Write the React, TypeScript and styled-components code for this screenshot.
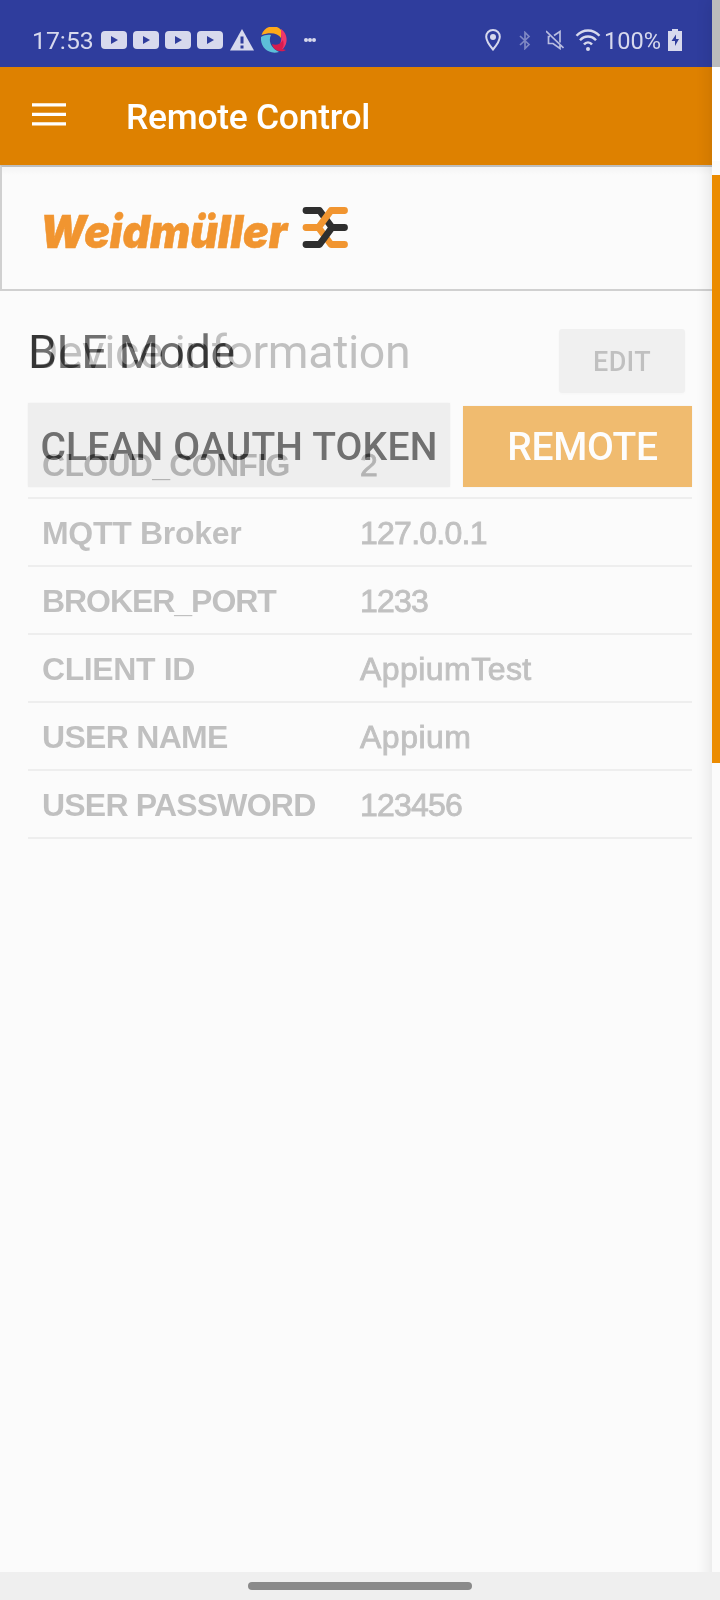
import React from 'react';
import styled, { createGlobalStyle } from 'styled-components';

const GlobalStyle = createGlobalStyle`
  *, *::before, *::after { box-sizing: border-box; }
  body { margin: 0; background: #fbfbfb; font-family: Roboto, sans-serif; overflow: hidden; }
`;

const Screen = styled.div`
  position: relative;
  width: 720px;
  height: 1600px;
  display: flex;
  flex-direction: column;
  background: #fbfbfb;
  overflow: hidden;
`;

const StatusBar = styled.header`
  flex: none;
  height: 67px;
  padding: 13px 38px 0 32px;
  display: flex;
  align-items: center;
  justify-content: space-between;
  background: #2f3d9d;
  color: #d7d9ed;
`;

const StatusGroup = styled.div`
  display: flex;
  align-items: center;
`;

const StatusText = styled.span<{ $size: number; $width: number; $gap?: number }>`
  width: ${(p) => p.$width}px;
  margin-left: ${(p) => p.$gap ?? 0}px;
  padding-top: 2px;
  font-size: ${(p) => p.$size}px;
  line-height: 30px;
  white-space: nowrap;
`;

const Glyph = styled.svg<{ $gap?: number }>`
  display: block;
  flex: none;
  margin-left: ${(p) => p.$gap ?? 0}px;
`;

const Toolbar = styled.div`
  flex: none;
  height: 98px;
  padding-left: 32px;
  display: flex;
  align-items: center;
  gap: 60px;
  background: #de8100;
`;

const MenuButton = styled.button`
  width: 34px;
  height: 24px;
  padding: 0;
  border: 0;
  background: none;
  margin-bottom: 2px;
`;

const ToolbarTitle = styled.h1`
  margin: 2px 0 0;
  font-size: 35.5px;
  font-weight: 500;
  line-height: 44px;
  letter-spacing: -0.3px;
  color: #fff;
`;

const Banner = styled.section`
  flex: none;
  height: 126px;
  padding: 0 0 0 34px;
  display: flex;
  align-items: center;
  border: 2px solid #d0d0d0;
  border-top-color: #bebebe;
  border-right: 0;
  background: linear-gradient(#f4f4f4, #fbfbfb 8px);
`;

const Stage = styled.main`
  flex: 1;
  display: grid;
  grid-template: minmax(0, 1fr) / 720px;
  padding-top: 28px;
`;

const Page = styled.div<{ $fading?: boolean }>`
  grid-area: 1 / 1;
  padding: 0 28px;
  mix-blend-mode: ${(p) => (p.$fading ? 'difference' : 'normal')};
`;

const Heading = styled.h2<{ $color: string }>`
  margin: 0;
  height: 66px;
  font-size: 46.5px;
  font-weight: 400;
  line-height: 66px;
  letter-spacing: -0.4px;
  white-space: nowrap;
  color: ${(p) => p.$color};
`;

const Actions = styled.div`
  display: flex;
  align-items: flex-end;
  gap: 13px;
  margin-top: 18px;
`;

const ActionButton = styled.button<{ $primary?: boolean }>`
  width: ${(p) => (p.$primary ? 229 : 422)}px;
  height: ${(p) => (p.$primary ? 81 : 84)}px;
  padding: ${(p) => (p.$primary ? '1px 0 0 10px' : '3px 0 0')};
  border: 0;
  background: ${(p) => (p.$primary ? '#f0bb6f' : '#eeeeee')};
  color: ${(p) => (p.$primary ? '#fdfdfd' : '#707070')};
  font: 500 39px/46px Roboto, sans-serif;
  letter-spacing: ${(p) => (p.$primary ? -0.3 : 0.18)}px;
  white-space: nowrap;
  box-shadow: 0 0 2px rgba(0, 0, 0, 0.05);
`;

const HeadingRow = styled.div`
  height: 84px;
  display: flex;
  justify-content: space-between;
`;

const EditButton = styled.button`
  width: 126px;
  height: 64px;
  margin: 10px 7px 0 0;
  padding: 2px 0 0;
  border: 0;
  border-radius: 3px;
  background: #0b0b0b;
  color: #3b3b3b;
  font: 500 27px/32px Roboto, sans-serif;
  letter-spacing: 0.3px;
  box-shadow: 0 1px 3px #060606;
`;

const Settings = styled.dl`
  margin: 28px 0 0;
`;

const SettingRow = styled.div`
  height: 68px;
  padding: 2px 0 0 14px;
  display: grid;
  grid-template-columns: 318px 1fr;
  align-items: center;
  border-bottom: 2px solid #0d0d0d;
  color: #3b3b3b;
  font-family: 'Liberation Sans', Arial, sans-serif;
  font-size: 32px;
  line-height: 36px;
`;

const Label = styled.dt<{ $tracking: number }>`
  font-weight: 700;
  letter-spacing: ${(p) => p.$tracking}px;
  white-space: nowrap;
`;

const Value = styled.dd<{ $tracking: number }>`
  margin: 0;
  letter-spacing: ${(p) => p.$tracking}px;
  -webkit-text-stroke: 0.9px #3b3b3b;
`;

const NavigationBar = styled.footer`
  position: relative;
  z-index: 2;
  flex: none;
  height: 28px;
  display: flex;
  align-items: center;
  justify-content: center;
  background: #efefef;
`;

const HomeHandle = styled.div`
  width: 224px;
  height: 8px;
  border-radius: 4px;
  background: #8a8a8a;
`;

/* The next page's edge lies over the current one */
const DrawerEdge = styled.aside`
  position: absolute;
  z-index: 1;
  top: 0;
  right: 0;
  bottom: 0;
  width: 8px;
  display: flex;
  flex-direction: column;
  background: #fbfbfb;
  box-shadow: 0 0 16px rgba(0, 0, 0, 0.16);
`;

const EdgeBand = styled.div<{ $height: number; $color: string }>`
  height: ${(p) => p.$height}px;
  background: ${(p) => p.$color};
`;

const settings = [
  { label: 'CLOUD_CONFIG', labelTracking: -0.7, value: '2', valueTracking: 0 },
  { label: 'MQTT Broker', labelTracking: -0.3, value: '127.0.0.1', valueTracking: -0.75 },
  { label: 'BROKER_PORT', labelTracking: -1.05, value: '1233', valueTracking: -0.8 },
  { label: 'CLIENT ID', labelTracking: -0.4, value: 'AppiumTest', valueTracking: 0.45 },
  { label: 'USER NAME', labelTracking: -0.7, value: 'Appium', valueTracking: 0.5 },
  { label: 'USER PASSWORD', labelTracking: -0.8, value: '123456', valueTracking: -0.8 },
];

const VideoIcon = ({ gap }: { gap: number }) => (
  <Glyph $gap={gap} width="26" height="18" viewBox="0 0 26 18">
    <rect width="26" height="18" rx="4" fill="#d7d9ed" />
    <path d="M10 5v8l7-4z" fill="#2f3d9d" />
  </Glyph>
);

const WarningIcon = () => (
  <Glyph $gap={7} width="24" height="22" viewBox="0 0 24 22">
    <path d="M12 0 24 21.5H0z" fill="#d7d9ed" />
    <path d="M10.5 7.5h3v7h-3zM10.5 16.5h3v3h-3z" fill="#2f3d9d" />
  </Glyph>
);

const SwirlIcon = () => (
  <Glyph $gap={7} width="26" height="26" viewBox="0 0 26 26">
    <path d="M.5 8C4-2.500 16-2.500 20 3v8C17 6 9 5 .5 8z" fill="#ffa91a" />
    <path d="M20 2c6 4 8 13 2 20l-8-1c5-1 7-7 6-13z" fill="#f0386a" />
    <path d="M0 10c3-2 7-2.500 10-2-3 6 0 13 8 17C7 28-1 20 0 10z" fill="#5dbfd9" />
    <path d="M11 17c4 2 9 0 11-4 1 4 1 6-1 9l4 1-2 1c-7 1-11-2-12-7z" fill="#d81b4f" />
  </Glyph>
);

const MoreIcon = () => (
  <Glyph $gap={17} width="12" height="4" viewBox="0 0 12 4" fill="#d7d9ed">
    <circle cx="2" cy="2" r="2" />
    <circle cx="6" cy="2" r="2" />
    <circle cx="10" cy="2" r="2" />
  </Glyph>
);

const PinIcon = () => (
  <Glyph width="16" height="22" viewBox="0 0 16 22">
    <path d="M8 1C4 1 1.2 4 1.2 7.8 1.2 12.5 8 20.5 8 20.5s6.800-8 6.800-12.700C14.800 4 12 1 8 1z" fill="none" stroke="#d7d9ed" strokeWidth="2" />
    <circle cx="8" cy="8" r="3" fill="#d7d9ed" />
  </Glyph>
);

const BluetoothIcon = () => (
  <Glyph $gap={18} width="12" height="19" viewBox="0 0 12 19">
    <path d="m1 5 9 8.500-4 4v-16l4 4L1 14" fill="none" stroke="#7f88c3" strokeWidth="1.700" />
  </Glyph>
);

const MuteIcon = () => (
  <Glyph $gap={14.5} width="18" height="20" viewBox="0 0 18 20" fill="none" stroke="#b9bde0" strokeWidth="1.700">
    <path d="m0 1 17.500 17M8 5.500l6-4v11M4 6.500H2.500v7H7l7 5v-4" />
  </Glyph>
);

const WifiIcon = () => (
  <Glyph $gap={11} width="26" height="22" viewBox="0 0 26 22">
    <path d="M1.500 6.800c6.500-7 16.500-7 23 0M5 11.300c4.500-5 11.500-5 16 0M9 15.500c2-2.800 6-2.800 8 0" fill="none" stroke="#d7d9ed" strokeWidth="2.400" />
    <circle cx="13" cy="20" r="2" fill="#d7d9ed" />
  </Glyph>
);

const BatteryIcon = () => (
  <Glyph $gap={9} width="14" height="22" viewBox="0 0 14 22">
    <path d="M4 0h6v2h4v20H0V2h4z" fill="#d7d9ed" />
    <path d="M8 5.500 3.500 12H7v5l4-7H8z" fill="#2f3d9d" />
  </Glyph>
);

const MenuIcon = () => (
  <Glyph width="34" height="24" viewBox="0 0 34 24" fill="#fff">
    <path d="M0 .2h34v3.300H0zM0 9.700h34v3.300H0zM0 19.200h34v3.300H0z" />
  </Glyph>
);

const BrandLogo = () => (
  <Glyph width="318" height="60" viewBox="36 198 318 60">
    <text x="40.200" y="247.700" textLength="247" lengthAdjust="spacingAndGlyphs" fontFamily="Inter, sans-serif" fontSize="45.500" fontWeight="900" fontStyle="italic" fill="#f19530" stroke="#f19530" strokeWidth="0.500">
      Weidmüller
    </text>
    <g fill="none" strokeWidth="6.800" strokeLinecap="round" strokeLinejoin="round">
      <path d="M306 210.500h13.500l12.500 17h12.500" stroke="#2e2e2e" />
      <path d="M344.500 210.500H331l-12.500 17H306M318.500 227.500l12.500 17h13.500" stroke="#f19530" />
      <path d="M332 227.500l-12.500 17H306" stroke="#2e2e2e" />
    </g>
  </Glyph>
);

export default function App() {
  return (
    <>
      <GlobalStyle />
      <Screen>
        <StatusBar>
          <StatusGroup>
            <StatusText $size={24.8} $width={62}>17:53</StatusText>
            <VideoIcon gap={7} />
            <VideoIcon gap={6} />
            <VideoIcon gap={6} />
            <VideoIcon gap={6} />
            <WarningIcon />
            <SwirlIcon />
            <MoreIcon />
          </StatusGroup>
          <StatusGroup>
            <PinIcon />
            <BluetoothIcon />
            <MuteIcon />
            <WifiIcon />
            <StatusText $size={23.6} $width={55} $gap={3.5}>100%</StatusText>
            <BatteryIcon />
          </StatusGroup>
        </StatusBar>
        <Toolbar>
          <MenuButton aria-label="Menu">
            <MenuIcon />
          </MenuButton>
          <ToolbarTitle>Remote Control</ToolbarTitle>
        </Toolbar>
        <Banner>
          <BrandLogo />
        </Banner>
        <Stage>
          <Page>
            <Heading $color="#707070">BLE Mode</Heading>
            <Actions>
              <ActionButton>CLEAN OAUTH TOKEN</ActionButton>
              <ActionButton $primary>REMOTE</ActionButton>
            </Actions>
          </Page>
          <Page $fading>
            <HeadingRow>
              <Heading $color="#3b3b3b">Device information</Heading>
              <EditButton>EDIT</EditButton>
            </HeadingRow>
            <Settings>
              {settings.map((row) => (
                <SettingRow key={row.label}>
                  <Label $tracking={row.labelTracking}>{row.label}</Label>
                  <Value $tracking={row.valueTracking}>{row.value}</Value>
                </SettingRow>
              ))}
            </Settings>
          </Page>
        </Stage>
        <NavigationBar>
          <HomeHandle />
        </NavigationBar>
        <DrawerEdge>
          <EdgeBand $height={67} $color="#bcbcbc" />
          <EdgeBand $height={94} $color="#ffffff" />
          <EdgeBand $height={14} $color="#fbfbfb" />
          <EdgeBand $height={588} $color="#eb8b00" />
        </DrawerEdge>
      </Screen>
    </>
  );
}
